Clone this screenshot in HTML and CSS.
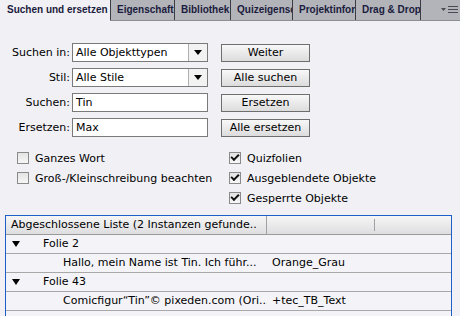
FILE: index.html
```html
<!doctype html>
<html lang="de">
  <head>
    <meta charset="UTF-8">
    <title>Suchen und ersetzen</title>
    <link rel="stylesheet" href="styles.css">
  </head>
  <body>
    <nav class="tabs">
      <span class="tab active">Suchen und ersetzen</span>
      <span class="tab t-eig">Eigenschafte</span>
      <span class="tab t-bib">Bibliothek</span>
      <span class="tab t-quiz">Quizeigensc</span>
      <span class="tab t-proj">Projektinfor</span>
      <span class="tab t-drag">Drag &amp; Drop</span>
      <span class="tab-menu">
        <svg width="20" height="10" viewBox="0 0 20 10">
          <path d="M1 3h5l-2.5 3z" fill="#4a4a55"/>
          <path d="M8 1.5h10M8 4.5h10M8 7.5h10" stroke="#4a4a55" stroke-width="1.2"/>
        </svg>
      </span>
    </nav>

    <main class="panel">
      <div class="form">
        <label class="lbl">Suchen in:</label>
        <div class="select"><span class="val">Alle Objekttypen</span><span class="arrow"></span></div>
        <button class="btn">Weiter</button>

        <label class="lbl">Stil:</label>
        <div class="select"><span class="val">Alle Stile</span><span class="arrow"></span></div>
        <button class="btn">Alle suchen</button>

        <label class="lbl">Suchen:</label>
        <div class="field">Tin</div>
        <button class="btn">Ersetzen</button>

        <label class="lbl">Ersetzen:</label>
        <div class="field">Max</div>
        <button class="btn">Alle ersetzen</button>
      </div>

      <div class="options">
        <div class="col col-left">
          <div class="check"><span class="box"></span>Ganzes Wort</div>
          <div class="check"><span class="box"></span>Groß-/Kleinschreibung beachten</div>
        </div>
        <div class="col col-right">
          <div class="check"><span class="box on"></span>Quizfolien</div>
          <div class="check"><span class="box on"></span>Ausgeblendete Objekte</div>
          <div class="check"><span class="box on"></span>Gesperrte Objekte</div>
        </div>
      </div>

      <div class="list">
        <div class="list-head">
          <span class="c1">Abgeschlossene Liste (2 Instanzen gefunde..</span>
          <span class="c2"></span>
        </div>
        <div class="row group"><span class="tri"></span><span class="name">Folie 2</span></div>
        <div class="row item"><span class="name">Hallo, mein Name ist Tin. Ich führ...</span><span class="style">Orange_Grau</span></div>
        <div class="row group"><span class="tri"></span><span class="name">Folie 43</span></div>
        <div class="row item"><span class="name">Comicfigur“Tin”© pixeden.com (Ori...</span><span class="style">+tec_TB_Text</span></div>
        <div class="row item"></div>
      </div>
    </main>
  </body>
</html>
```

FILE: styles.css
```css
html, body {
  margin: 0;
  height: 100%;
}
body {
  background-color: #f0f0f5;
  color: #000;
  font-family: "DejaVu Sans", sans-serif;
  font-size: 11px;
  overflow: hidden
}

/* tab bar */
.tabs {
  background-color: #b2b4ba;
  border-bottom: 1px solid #8c8e94;
  display: flex;
  height: 20px
}
.tab {
  border-left: 1px solid #3c3d44;
  box-sizing: border-box;
  color: #1b1b3d;
  font-family: "Liberation Sans", sans-serif;
  font-size: 10px;
  font-weight: bold;
  line-height: 20px;
  overflow: hidden;
  padding-left: 6px;
  white-space: nowrap
}
.tab.active {
  background-color: #f0f0f5;
  border-left: 0;
  height: 21px;
  padding-left: 7px;
  width: 110px
}
.t-eig { width: 64px }
.t-bib { width: 56px }
.t-quiz { width: 62px }
.t-proj { width: 63px }
.t-drag { width: 65px }
.tab-menu {
  border-left: 1px solid #3c3d44;
  flex: 1;
  padding: 5px 0 0 19px
}

/* form */
.panel {
  padding: 22px 0 0 0
}
.form {
  display: grid;
  grid-template-columns: 72px 136px 89px;
  grid-auto-rows: 19px;
  row-gap: 6px;
  align-items: center
}
.lbl {
  padding-right: 2px;
  text-align: right
}
.select, .field {
  background-color: #fff;
  border: 1px solid #7a7a7a;
  box-sizing: border-box;
  display: flex;
  height: 19px;
  line-height: 17px;
  padding-left: 3px
}
.select .val {
  flex: 1
}
.select .arrow {
  background-color: #f2f2f2;
  border-left: 1px solid #b0b0b0;
  position: relative;
  width: 18px
}
.select .arrow::after {
  border-left: 4px solid transparent;
  border-right: 4px solid transparent;
  border-top: 5px solid #000;
  content: "";
  left: 5px;
  position: absolute;
  top: 6px
}
.btn {
  background: linear-gradient(#f8f8f8, #dcdcdc);
  border: 1px solid #6e6e6e;
  box-sizing: border-box;
  color: #000;
  font: 11px "DejaVu Sans", sans-serif;
  height: 18px;
  margin-left: 13px;
  padding: 0;
  width: 89px
}

/* options */
.options {
  display: flex;
  padding-top: 15px
}
.col {
  display: flex;
  flex-direction: column;
  gap: 8px
}
.col-left {
  padding-left: 17px;
  width: 212px
}
.check {
  align-items: center;
  display: flex;
  height: 12px
}
.box {
  background: linear-gradient(#e4e4e4, #f6f6f6);
  border: 1px solid #8a8a8a;
  box-sizing: border-box;
  height: 12px;
  margin-right: 6px;
  position: relative;
  width: 12px
}
.box.on::after {
  border-bottom: 2px solid #111;
  border-left: 2px solid #111;
  content: "";
  height: 3px;
  left: 1px;
  position: absolute;
  top: 1px;
  transform: rotate(-45deg);
  width: 6px
}

/* result list */
.list {
  background-color: #f4f4f8;
  border: 1px solid #1d5fc9;
  margin: 11px 8px 0 5px
}
.list-head {
  background: linear-gradient(#f6f6f6, #dedee0);
  border-bottom: 1px solid #9a9a9a;
  display: flex;
  height: 18px;
  line-height: 18px
}
.list-head .c1 {
  border-right: 1px solid #a0a0a0;
  padding-left: 5px;
  width: 255px;
  overflow: hidden;
  white-space: nowrap
}
.list-head .c2 {
  border-right: 1px solid #a0a0a0;
  margin: 3px 0;
  width: 107px
}
.row {
  border-bottom: 1px solid #a8a8a8;
  display: flex;
  height: 18px;
  line-height: 18px;
  white-space: nowrap
}
.row .tri {
  border-left: 4px solid transparent;
  border-right: 4px solid transparent;
  border-top: 6px solid #000;
  height: 0;
  margin: 6px 0 0 6px;
  width: 0
}
.group .name {
  padding-left: 23px
}
.item .name {
  overflow: hidden;
  padding-left: 57px;
  width: 204px
}
.item .style {
  padding-left: 5px
}
```
